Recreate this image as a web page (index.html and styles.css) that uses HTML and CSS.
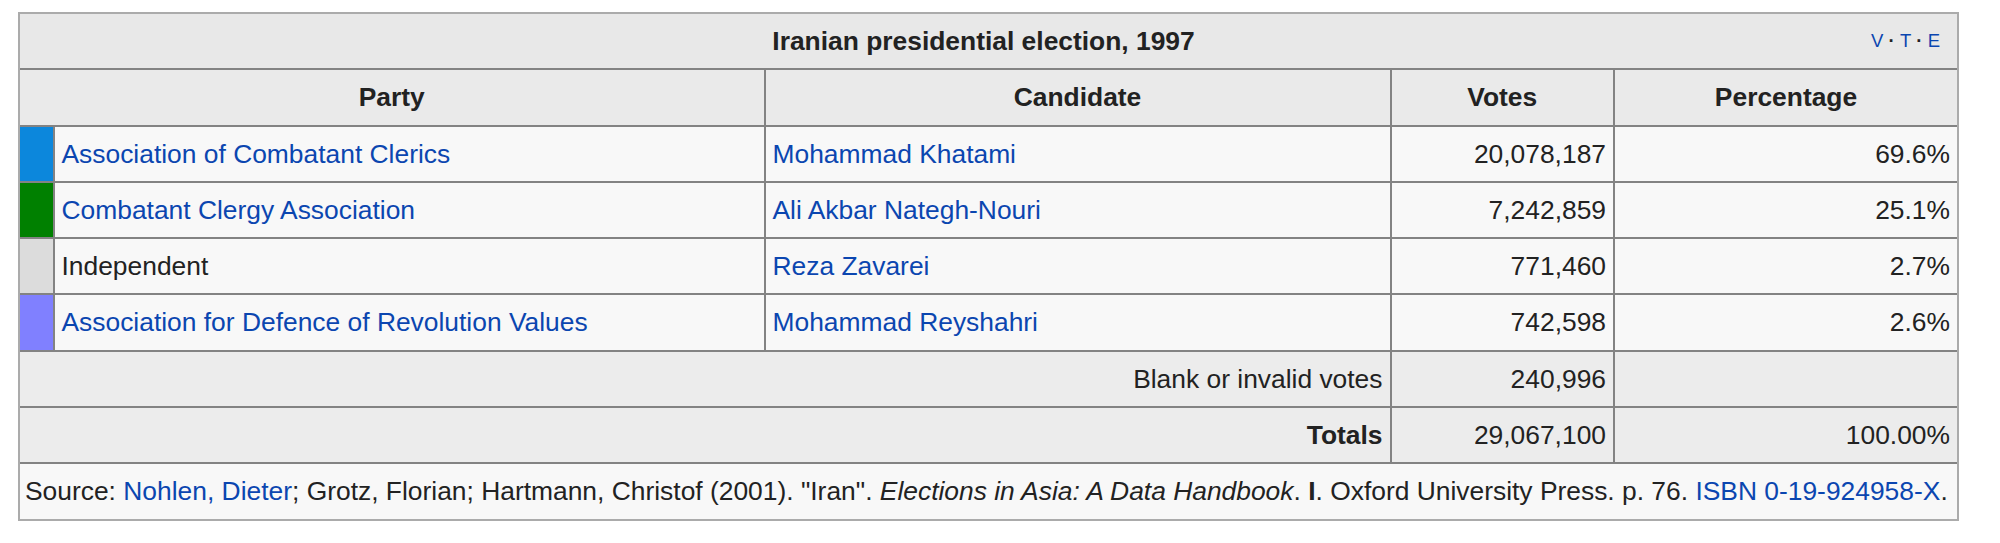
FILE: index.html
```html
<!DOCTYPE html>
<html lang="en">
<head>
<meta charset="utf-8">
<title>Iranian presidential election, 1997</title>
<link rel="stylesheet" href="styles.css">
</head>
<body>
<div class="page">
  <table class="results">
    <colgroup>
      <col class="c-swatch">
      <col class="c-party">
      <col class="c-cand">
      <col class="c-votes">
      <col class="c-pct">
    </colgroup>
    <tr class="title-row">
      <th colspan="5" class="title-cell">
        <div class="title-grid">
          <span></span>
          <span class="title-text">Iranian presidential election, 1997</span>
          <span class="navbar"><a href="#">V</a><b class="sep"> · </b><a href="#">T</a><b class="sep"> · </b><a href="#">E</a></span>
        </div>
      </th>
    </tr>
    <tr class="head-row">
      <th colspan="2">Party</th>
      <th>Candidate</th>
      <th>Votes</th>
      <th>Percentage</th>
    </tr>
    <tr class="data-row">
      <td class="swatch sw-blue"></td>
      <td><a href="#">Association of Combatant Clerics</a></td>
      <td><a href="#">Mohammad Khatami</a></td>
      <td class="num">20,078,187</td>
      <td class="num">69.6%</td>
    </tr>
    <tr class="data-row">
      <td class="swatch sw-green"></td>
      <td><a href="#">Combatant Clergy Association</a></td>
      <td><a href="#">Ali Akbar Nategh-Nouri</a></td>
      <td class="num">7,242,859</td>
      <td class="num">25.1%</td>
    </tr>
    <tr class="data-row">
      <td class="swatch sw-grey"></td>
      <td>Independent</td>
      <td><a href="#">Reza Zavarei</a></td>
      <td class="num">771,460</td>
      <td class="num">2.7%</td>
    </tr>
    <tr class="data-row">
      <td class="swatch sw-violet"></td>
      <td><a href="#">Association for Defence of Revolution Values</a></td>
      <td><a href="#">Mohammad Reyshahri</a></td>
      <td class="num">742,598</td>
      <td class="num">2.6%</td>
    </tr>
    <tr class="sum-row">
      <td colspan="3" class="num">Blank or invalid votes</td>
      <td class="num">240,996</td>
      <td></td>
    </tr>
    <tr class="sum-row">
      <th colspan="3" class="num">Totals</th>
      <td class="num">29,067,100</td>
      <td class="num">100.00%</td>
    </tr>
    <tr class="source-row">
      <td colspan="5">Source: <a href="#">Nohlen, Dieter</a>; Grotz, Florian; Hartmann, Christof (2001). "Iran". <i>Elections in Asia: A Data Handbook</i>. <b>I</b>. Oxford University Press. p. 76. <a href="#">ISBN 0-19-924958-X</a>.</td>
    </tr>
  </table>
</div>
</body>
</html>
```

FILE: styles.css
```css
html, body {
  margin: 0;
  padding: 0;
  background: #ffffff;
}

.page {
  padding: 12px 0 0 18px;
  font-family: "Liberation Sans", Arial, sans-serif;
  font-size: 26.4px;
  color: #222222;
}

a {
  color: #0b46b0;
  text-decoration: none;
}

.results {
  width: 1941px;
  table-layout: fixed;
  border-collapse: separate;
  border-spacing: 0;
  border: 2px solid #ababab;
}

.c-swatch { width: 34.5px; }
.c-party { width: 711px; }
.c-cand { width: 626px; }
.c-votes { width: 223.5px; }
.c-pct { width: 342px; }

.results th,
.results td {
  padding: 12px 7px;
  line-height: 30.3px;
  border-right: 2px solid #838383;
  border-bottom: 2px solid #838383;
  text-align: left;
  vertical-align: middle;
  white-space: nowrap;
}

.results tr > :last-child {
  border-right: none;
}

.results tr:last-child > * {
  border-bottom: none;
}

.results th {
  font-weight: bold;
  text-align: center;
}

.title-row th {
  background: #e8e8e8;
  padding-right: 17px;
}

.title-grid {
  display: grid;
  grid-template-columns: 1fr auto 1fr;
  align-items: center;
}

.title-text {
  font-weight: bold;
}

.navbar {
  justify-self: end;
  font-size: 18.5px;
  font-weight: normal;
}

.navbar .sep {
  font-weight: bold;
  color: #222222;
  white-space: pre;
}

.head-row th {
  background: #eaeaea;
}

.data-row td {
  background: #f8f8f8;
}

.results .swatch {
  padding: 0;
}

.sw-blue { background: #0c87dc !important; }
.sw-green { background: #008000 !important; }
.sw-grey { background: #dcdcdc !important; }
.sw-violet { background: #8080ff !important; }

.sum-row td,
.sum-row th {
  background: #ececec;
}

.results .num {
  text-align: right;
}

.results .source-row td {
  background: #f8f8f8;
  text-align: left;
  padding-left: 5px;
}
```
